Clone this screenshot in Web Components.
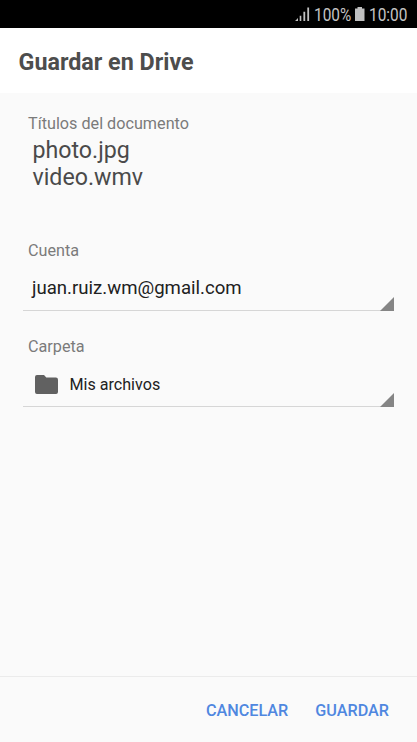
<!DOCTYPE html>
<html lang="es">
<head>
<meta charset="utf-8">
<title>Guardar en Drive</title>
<style>
  body {
    margin: 0;
    background: #fafafa;
    font-family: Roboto, "Liberation Sans", sans-serif;
  }
</style>
</head>
<body>
<drive-save-screen></drive-save-screen>

<script>
class StatusBar extends HTMLElement {
  connectedCallback() {
    this.attachShadow({ mode: 'open' });
    this.shadowRoot.innerHTML = `
      <style>
        :host {
          display: flex;
          align-items: center;
          justify-content: flex-end;
          height: 28px;
          box-sizing: border-box;
          padding-right: 9px;
          background: #000;
          color: #c4c4c4;
          font-size: 17.5px;
          line-height: 28px;
        }

        svg {
          display: block;
          fill: #c0c0c0;
        }

        .signal {
          margin-right: 4px;
        }

        .battery {
          margin: 0 4px 0 3px;
        }

        .level {
          width: 38px;
          white-space: nowrap;
        }

        .text {
          display: block;
          padding-top: 1px;
          transform-origin: 0 50%;
        }

        .time {
          width: 39px;
          white-space: nowrap;
        }
      </style>

      <svg class="signal" width="15" height="14" viewBox="0 0 15 14">
        <path d="M0 14L3 11V14ZM4.7 8.8H6.3V14H4.7ZM8.4 4.8H10.2V14H8.4ZM12.3 0.5H14.1V14H12.3Z"/>
      </svg>
      <span class="level"><span class="text" style="transform: scaleX(.88)">100%</span></span>
      <svg class="battery" width="10" height="14" viewBox="0 0 10 14">
        <path d="M2.5 0H7V1.5H9.5V14H0V1.5H2.5Z"/>
      </svg>
      <span class="time"><span class="text" style="transform: scaleX(.88)">10:00</span></span>
    `;
  }
}

class TitleBar extends HTMLElement {
  connectedCallback() {
    this.attachShadow({ mode: 'open' });
    this.shadowRoot.innerHTML = `
      <style>
        :host {
          display: block;
          height: 65px;
          box-sizing: border-box;
          padding: 1px 0 0 18.5px;
          background: #fff;
          color: #4d4d4d;
          font-size: 23.3px;
          font-weight: 700;
          line-height: 66px;
        }
      </style>
      <slot></slot>
    `;
  }
}

class FormField extends HTMLElement {
  connectedCallback() {
    this.attachShadow({ mode: 'open' });
    this.shadowRoot.innerHTML = `
      <style>
        :host {
          display: block;
        }

        .label {
          padding-left: 5px;
          color: #7b7b7b;
          font-size: 16.2px;
          line-height: 20px;
        }
      </style>
      <div class="label">${this.getAttribute('label')}</div>
      <slot></slot>
    `;
  }
}

class SpinnerBox extends HTMLElement {
  connectedCallback() {
    this.attachShadow({ mode: 'open' });
    this.shadowRoot.innerHTML = `
      <style>
        :host {
          display: flex;
          align-items: flex-end;
          justify-content: space-between;
          border-bottom: 1px solid #d6d6d6;
          color: #212121;
        }

        .value {
          display: flex;
          align-items: center;
          height: 49px;
          box-sizing: border-box;
          padding: 5px 0 0 9px;
        }

        .arrow {
          display: block;
          margin-bottom: -1px;
          fill: #858585;
        }
      </style>
      <div class="value"><slot></slot></div>
      <svg class="arrow" width="14" height="14" viewBox="0 0 14 14">
        <path d="M14 0V14H0Z"/>
      </svg>
    `;
  }
}

class FolderIcon extends HTMLElement {
  connectedCallback() {
    this.attachShadow({ mode: 'open' });
    this.shadowRoot.innerHTML = `
      <style>
        :host {
          display: block;
        }

        svg {
          display: block;
          fill: #616161;
        }
      </style>
      <svg width="23" height="19" viewBox="0 0 24 19" preserveAspectRatio="none">
        <path d="M2.4 0H9.4L11.8 2.4H21.6A2.3 2.3 0 0 1 24 4.7V16.6A2.3 2.3 0 0 1 21.6 19H2.4A2.3 2.3 0 0 1 0 16.6V2.4A2.3 2.3 0 0 1 2.4 0Z"/>
      </svg>
    `;
  }
}

class FlatButton extends HTMLElement {
  connectedCallback() {
    this.attachShadow({ mode: 'open' });
    this.shadowRoot.innerHTML = `
      <style>
        :host {
          display: block;
        }

        button {
          display: block;
          margin: 0;
          padding: 0;
          border: 0;
          background: none;
          color: #4f87e0;
          font: 500 16.2px/20px Roboto, "Liberation Sans", sans-serif;
        }
      </style>
      <button type="button"><slot></slot></button>
    `;
  }
}

class DriveSaveScreen extends HTMLElement {
  connectedCallback() {
    this.attachShadow({ mode: 'open' });
    this.shadowRoot.innerHTML = `
      <style>
        :host {
          display: flex;
          flex-direction: column;
          height: 742px;
          background: #fafafa;
        }

        main {
          flex: 1;
          padding: 21px 23px 0;
        }

        .titles {
          padding: 3px 0 0 9.5px;
          color: #4a4a4a;
          font-size: 23.2px;
          line-height: 27px;
        }

        .account {
          margin-top: 50px;
        }

        .folder {
          margin-top: 26px;
        }

        .email {
          font-size: 18.6px;
          line-height: 22px;
        }

        folder-icon {
          margin: 0 11.5px 0 3px;
        }

        .name {
          font-size: 16.1px;
          line-height: 20px;
        }

        .folder .name,
        .folder folder-icon {
          padding-top: 1px;
        }

        footer {
          display: flex;
          align-items: center;
          justify-content: flex-end;
          gap: 27px;
          height: 66px;
          box-sizing: border-box;
          border-top: 1px solid #ebebeb;
          padding: 2px 28px 0 0;
        }
      </style>

      <status-bar></status-bar>
      <title-bar>Guardar en Drive</title-bar>
      <main>
        <form-field label="Títulos del documento">
          <div class="titles">
            <div>photo.jpg</div>
            <div>video.wmv</div>
          </div>
        </form-field>
        <form-field class="account" label="Cuenta">
          <spinner-box><span class="email">juan.ruiz.wm@gmail.com</span></spinner-box>
        </form-field>
        <form-field class="folder" label="Carpeta">
          <spinner-box><folder-icon></folder-icon><span class="name">Mis archivos</span></spinner-box>
        </form-field>
      </main>
      <footer>
        <flat-button>CANCELAR</flat-button>
        <flat-button>GUARDAR</flat-button>
      </footer>
    `;
  }
}

customElements.define('status-bar', StatusBar);
customElements.define('title-bar', TitleBar);
customElements.define('form-field', FormField);
customElements.define('spinner-box', SpinnerBox);
customElements.define('folder-icon', FolderIcon);
customElements.define('flat-button', FlatButton);
customElements.define('drive-save-screen', DriveSaveScreen);
</script>
</body>
</html>
